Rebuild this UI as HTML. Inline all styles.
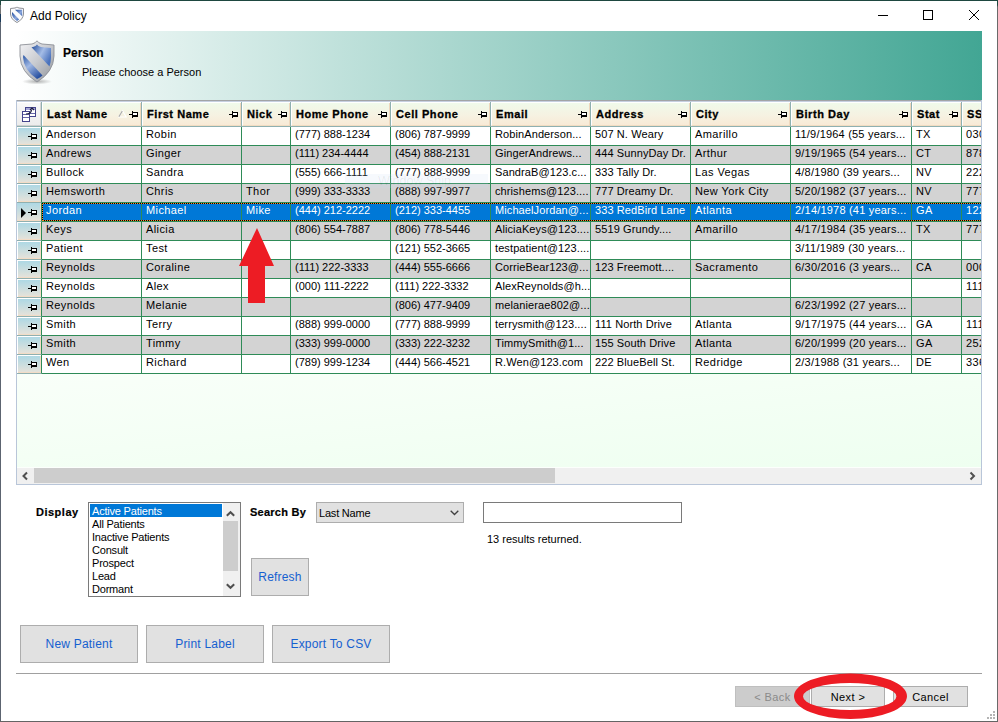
<!DOCTYPE html>
<html><head><meta charset="utf-8">
<style>
*{margin:0;padding:0;box-sizing:border-box}
html,body{width:998px;height:722px;overflow:hidden;background:#fff;font-family:"Liberation Sans",sans-serif;position:relative}
.a{position:absolute}
#bt{left:0;top:0;width:998px;height:1px;background:#1e4840}
#bl{left:0;top:0;width:1px;height:722px;background:linear-gradient(#1e4840 0,#1e4840 5px,#727272 5px,#727272 14px,#1a3a5a 14px,#1a3a5a 22px,#5c6470 22px,#5c6470)}
#br{left:997px;top:0;width:1px;height:722px;background:linear-gradient(#1e4840 0,#1e4840 5px,#6a6a6a 7px,#6a6a6a)}
#bb{left:0;top:721px;width:998px;height:1px;background:#646464}
#title{left:30px;top:8px;font-size:12px;color:#000;line-height:16px}
#band{left:16px;top:31px;width:966px;height:69px;background:linear-gradient(to right,#ffffff,#42a694)}
#person{left:63px;top:46px;font-size:12px;font-weight:bold;line-height:14px;-webkit-text-stroke:0.15px #000}
#choose{left:82px;top:66px;font-size:11px;line-height:13px}
.gw{left:17px;top:101px;width:964px;height:383px;overflow:hidden;background:#f4fff4}
#empty{left:17px;top:374px;width:964px;height:93px;border-bottom:0;background:linear-gradient(to bottom right,#f9fff9,#eefff0)}
.gi{position:absolute;left:-17px;top:-101px;width:1100px;height:600px}
#gbt{left:16px;top:100px;width:966px;height:1px;background:#a2a4a6}
#gbl{left:16px;top:100px;width:1px;height:385px;background:#b9c6d9}
#gbr{left:981px;top:100px;width:1px;height:385px;background:#b9c6d9}
#gbb{left:16px;top:484px;width:966px;height:1px;background:#b9c6d9}
.hdr{position:absolute;left:17px;top:101px;width:1100px;height:26px;background:#fff;border-top:1px solid #c6d0e0;border-bottom:1px solid #8fb0b0}
.hc{position:absolute;top:103px;height:23px;background:linear-gradient(#f0faea,#f6f2e2 55%,#f8ead6);border-left:1px solid #fff;border-right:1px solid #efd8be;border-bottom:1px solid #f1dcc2}
.ht{position:absolute;left:4px;top:5px;font-size:11px;font-weight:bold;letter-spacing:0.55px;-webkit-text-stroke:0.3px #000;line-height:13px;color:#000;white-space:nowrap}
.hsep{position:absolute;top:102px;width:1px;height:25px;background:#8fb0b0}
.corner{position:absolute;left:17px;top:102px;width:24px;height:24px;border-top:1px solid #fff;background:linear-gradient(#f8f8f8,#ececec);border-right:1px solid #d6d6d6;border-bottom:1px solid #d0d0d0}
.csep{position:absolute;left:41px;top:102px;width:1px;height:25px;background:#8fb0b0}
.row{position:absolute;left:17px;width:1100px;height:19px;background:#fff}
.row.alt .c{background:#d3d3d3}
.row.sel .c{background:#0078d7;color:#fff}
.c{position:absolute;top:0;height:18px;font-size:11px;line-height:14px;padding-left:4px;letter-spacing:0.4px;white-space:nowrap;overflow:hidden;color:#000;border-bottom:1px solid #2e8b57;border-right:1px solid #2e8b57;box-sizing:content-box}
.rs{position:absolute;left:0;top:0;width:25px;height:19px;background:#fff;border-bottom:1px solid #8fb0b0;border-right:1px solid #2e8b57}
.rs:before{content:"";position:absolute;left:1px;top:1px;width:22px;height:16px;background:linear-gradient(#aed8e4,#e4e2da);border-right:1px solid #f3dcc6;border-bottom:1px solid #f3dcc6}
.pin{position:absolute;display:block}
.row.sel .rs:before{left:0;top:0;width:23px;height:17px}
.fh{position:absolute;left:25px;width:1000px;height:1px;background:repeating-linear-gradient(to right,#000 0,#000 1px,#ff8a28 1px,#ff8a28 2px)}
.fv{position:absolute;left:25px;top:0;width:1px;height:18px;background:repeating-linear-gradient(#000 0,#000 1px,#ff8a28 1px,#ff8a28 2px)}
.rp{left:11px;top:6px}
.hp{right:2px;top:8px}
.sort{position:absolute;left:75px;top:7px}
.arr{position:absolute;left:4px;top:5px;width:0;height:0;border-top:5px solid transparent;border-bottom:5px solid transparent;border-left:5px solid #000}
.lbl{font-size:11px;font-weight:bold;letter-spacing:0.5px;line-height:13px;-webkit-text-stroke:0.2px #000}
#lb{left:88px;top:502px;width:153px;height:95px;border:1px solid #7a7a7a;background:#fff}
#lb .it{position:absolute;left:3px;font-size:11px;line-height:13px;white-space:nowrap}
#lbsel{left:90px;top:504px;width:132px;height:13px;background:#0078d7}
#lbsb{left:223px;top:503px;width:17px;height:93px;background:#f0f0f0}
#lbth{left:223px;top:521px;width:15px;height:50px;background:#cdcdcd}
#combo{left:316px;top:502px;width:148px;height:21px;background:#e1e1e1;border:1px solid #adadad}
#combo span{position:absolute;left:2px;top:4px;letter-spacing:-0.2px;font-size:11px;line-height:13px}
#tb{left:483px;top:502px;width:199px;height:21px;border:1px solid #7a7a7a;background:#fff}
#res{left:487px;top:533px;font-size:11px;line-height:13px}
.btn{position:absolute;background:#e1e1e1;border:1px solid #adadad;color:#1560d0;font-size:12px;text-align:center;letter-spacing:0.2px}
#sep{left:16px;top:673px;width:966px;height:1px;background:#a0a0a0}
</style></head><body>
<div class="a" id="bt"></div><div class="a" id="bl"></div><div class="a" id="br"></div><div class="a" id="bb"></div>
<svg class="a" style="left:9px;top:6px" width="17" height="18" viewBox="9 6 17 18">
<defs><linearGradient id="tb1" x1="0" y1="0" x2="1" y2="1"><stop offset="0" stop-color="#1c4a9c"/><stop offset="0.6" stop-color="#8aa6dc"/><stop offset="1" stop-color="#3a64b0"/></linearGradient></defs>
<path d="M10.5,8.5 L15,8 Q16.5,7.6 17,7 Q17.5,7.6 19,8 L23.5,8.5 L23.5,14 Q23,19.5 17,22.5 Q11,19.5 10.5,14 Z" fill="#fbfbfc" stroke="#8e9196" stroke-width="1"/>
<path d="M15,9.8 L22.2,9.8 L22.2,16.2 Z" fill="url(#tb1)"/>
<path d="M12,12 L19.2,19.6 Q18.2,20.4 17,21 Q12.3,18 12,14 Z" fill="url(#tb1)"/>
</svg>
<div class="a" id="title">Add Policy</div>
<svg class="a" style="left:878px;top:10px" width="102" height="11" shape-rendering="crispEdges">
<rect x="0" y="5" width="10" height="1" fill="#000"/>
<rect x="45.5" y="0.5" width="9" height="9" fill="none" stroke="#000" stroke-width="1"/>
<path d="M91,0 L101,10 M101,0 L91,10" stroke="#000" stroke-width="1" shape-rendering="geometricPrecision"/>
</svg>
<div class="a" id="band"></div>
<svg class="a" style="left:16px;top:38px" width="42" height="48" viewBox="16 38 42 48">
<defs>
<linearGradient id="rim" x1="0" y1="0" x2="1" y2="1"><stop offset="0" stop-color="#f4f4f6"/><stop offset="0.5" stop-color="#c8cacf"/><stop offset="1" stop-color="#8e9298"/></linearGradient>
<linearGradient id="blu1" x1="0" y1="0" x2="1" y2="0.6"><stop offset="0" stop-color="#1f4a98"/><stop offset="0.55" stop-color="#a4bce6"/><stop offset="1" stop-color="#4a72bc"/></linearGradient>
<linearGradient id="blu2" x1="0" y1="0" x2="0.7" y2="1"><stop offset="0" stop-color="#2a56a4"/><stop offset="0.45" stop-color="#a0b8e4"/><stop offset="1" stop-color="#2850a0"/></linearGradient>
<linearGradient id="band" x1="0" y1="0" x2="1" y2="0"><stop offset="0" stop-color="#dcdde2"/><stop offset="0.5" stop-color="#f2f3f5"/><stop offset="0.52" stop-color="#d8dade"/><stop offset="1" stop-color="#eceef0"/></linearGradient>
<radialGradient id="shd" cx="0.5" cy="0.5" r="0.5"><stop offset="0" stop-color="#000" stop-opacity="0.3"/><stop offset="1" stop-color="#000" stop-opacity="0"/></radialGradient>
</defs>
<ellipse cx="37" cy="81.5" rx="15" ry="3" fill="url(#shd)"/>
<path d="M20,45 L32,44 Q35.5,43.2 37,40.8 Q38.5,43.2 42,44 L54,45 L54,56 Q53.5,72 37,82 Q20.5,72 20,56 Z" fill="url(#rim)" stroke="#8c9096" stroke-width="0.9"/>
<path d="M23,48 L33,47 Q36,46.2 37,44.5 Q38,46.2 41,47 L51,48 L51,57 Q50.5,70 37,79 Q23.5,70 23,57 Z" fill="url(#band)"/>
<path d="M31.5,47.3 L33,47 Q36,46.2 37,44.5 Q38,46.2 41,47 L51,48 L51,57 Q51,62 49.5,66.5 Z" fill="url(#blu1)"/>
<path d="M23.5,55 L42.5,75.5 Q40,77.5 37,79 Q23.5,70 23,57 Z" fill="url(#blu2)"/>
</svg>
<div class="a" id="person">Person</div>
<div class="a" id="choose">Please choose a Person</div>
<div class="a gw"><div class="gi">
<div class="hdr"></div>
<div class="corner"></div><div class="csep"></div>
<svg style="position:absolute;left:22px;top:107px" width="15" height="15" shape-rendering="crispEdges">
<rect x="3.5" y="0.5" width="10" height="9" fill="#fff" stroke="#44448c"/>
<rect x="4" y="1" width="9" height="2" fill="#a8a8d8"/>
<rect x="0.5" y="4.5" width="7" height="10" fill="#fff" stroke="#44448c"/>
<path d="M1,7.5 H7 M1,10.5 H7 M8,6.5 H13" stroke="#6868a8"/>
<path d="M4,7 Q9,7 9.5,3 M8,3 L10,1 L12,3" stroke="#202040" fill="none" stroke-width="1.2" shape-rendering="geometricPrecision"/>
</svg>
<div class="hc" style="left:42px;width:99px"><span class="ht">Last Name</span><svg class="sort" width="9" height="8"><path d="M4.5,0.8 L8.2,7 L0.8,7 Z" fill="none" stroke="#fff" stroke-width="1.2"/><path d="M4.3,1 L0.9,6.8" stroke="#a8a8a8" stroke-width="1.1"/></svg><svg class="pin hp" width="9" height="7" shape-rendering="crispEdges"><rect x="0" y="3" width="3" height="1"/><rect x="3" y="0" width="1" height="7"/><rect x="4" y="1" width="5" height="5"/><rect x="4" y="2" width="4" height="2" fill="#fff"/></svg></div>
<div class="hsep" style="left:141px"></div>
<div class="hc" style="left:142px;width:99px"><span class="ht">First Name</span><svg class="pin hp" width="9" height="7" shape-rendering="crispEdges"><rect x="0" y="3" width="3" height="1"/><rect x="3" y="0" width="1" height="7"/><rect x="4" y="1" width="5" height="5"/><rect x="4" y="2" width="4" height="2" fill="#fff"/></svg></div>
<div class="hsep" style="left:241px"></div>
<div class="hc" style="left:242px;width:48px"><span class="ht">Nick</span><svg class="pin hp" width="9" height="7" shape-rendering="crispEdges"><rect x="0" y="3" width="3" height="1"/><rect x="3" y="0" width="1" height="7"/><rect x="4" y="1" width="5" height="5"/><rect x="4" y="2" width="4" height="2" fill="#fff"/></svg></div>
<div class="hsep" style="left:290px"></div>
<div class="hc" style="left:291px;width:99px"><span class="ht">Home Phone</span><svg class="pin hp" width="9" height="7" shape-rendering="crispEdges"><rect x="0" y="3" width="3" height="1"/><rect x="3" y="0" width="1" height="7"/><rect x="4" y="1" width="5" height="5"/><rect x="4" y="2" width="4" height="2" fill="#fff"/></svg></div>
<div class="hsep" style="left:390px"></div>
<div class="hc" style="left:391px;width:99px"><span class="ht">Cell Phone</span><svg class="pin hp" width="9" height="7" shape-rendering="crispEdges"><rect x="0" y="3" width="3" height="1"/><rect x="3" y="0" width="1" height="7"/><rect x="4" y="1" width="5" height="5"/><rect x="4" y="2" width="4" height="2" fill="#fff"/></svg></div>
<div class="hsep" style="left:490px"></div>
<div class="hc" style="left:491px;width:99px"><span class="ht">Email</span><svg class="pin hp" width="9" height="7" shape-rendering="crispEdges"><rect x="0" y="3" width="3" height="1"/><rect x="3" y="0" width="1" height="7"/><rect x="4" y="1" width="5" height="5"/><rect x="4" y="2" width="4" height="2" fill="#fff"/></svg></div>
<div class="hsep" style="left:590px"></div>
<div class="hc" style="left:591px;width:99px"><span class="ht">Address</span><svg class="pin hp" width="9" height="7" shape-rendering="crispEdges"><rect x="0" y="3" width="3" height="1"/><rect x="3" y="0" width="1" height="7"/><rect x="4" y="1" width="5" height="5"/><rect x="4" y="2" width="4" height="2" fill="#fff"/></svg></div>
<div class="hsep" style="left:690px"></div>
<div class="hc" style="left:691px;width:99px"><span class="ht">City</span><svg class="pin hp" width="9" height="7" shape-rendering="crispEdges"><rect x="0" y="3" width="3" height="1"/><rect x="3" y="0" width="1" height="7"/><rect x="4" y="1" width="5" height="5"/><rect x="4" y="2" width="4" height="2" fill="#fff"/></svg></div>
<div class="hsep" style="left:790px"></div>
<div class="hc" style="left:791px;width:120px"><span class="ht">Birth Day</span><svg class="pin hp" width="9" height="7" shape-rendering="crispEdges"><rect x="0" y="3" width="3" height="1"/><rect x="3" y="0" width="1" height="7"/><rect x="4" y="1" width="5" height="5"/><rect x="4" y="2" width="4" height="2" fill="#fff"/></svg></div>
<div class="hsep" style="left:911px"></div>
<div class="hc" style="left:912px;width:49px"><span class="ht">Stat</span><svg class="pin hp" width="9" height="7" shape-rendering="crispEdges"><rect x="0" y="3" width="3" height="1"/><rect x="3" y="0" width="1" height="7"/><rect x="4" y="1" width="5" height="5"/><rect x="4" y="2" width="4" height="2" fill="#fff"/></svg></div>
<div class="hsep" style="left:961px"></div>
<div class="hc" style="left:962px;width:138px"><span class="ht">SSN</span></div>
<div class="hsep" style="left:1100px"></div>
<div class="row" style="top:127px"><div class="rs"><svg class="pin rp" width="9" height="7" shape-rendering="crispEdges"><rect x="0" y="3" width="3" height="1"/><rect x="3" y="0" width="1" height="7"/><rect x="4" y="1" width="5" height="5"/><rect x="4" y="2" width="4" height="2" fill="#fff"/></svg></div><div class="c" style="left:25px;width:95px">Anderson</div><div class="c" style="left:125px;width:95px">Robin</div><div class="c" style="left:225px;width:44px"></div><div class="c" style="left:274px;width:95px;letter-spacing:0">(777) 888-1234</div><div class="c" style="left:374px;width:95px;letter-spacing:0">(806) 787-9999</div><div class="c" style="left:474px;width:95px;letter-spacing:0.1px">RobinAnderson...</div><div class="c" style="left:574px;width:95px;letter-spacing:0.1px">507 N. Weary</div><div class="c" style="left:674px;width:95px">Amarillo</div><div class="c" style="left:774px;width:116px;letter-spacing:0.2px">11/9/1964 (55 years...</div><div class="c" style="left:895px;width:45px">TX</div><div class="c" style="left:945px;width:134px">030</div></div>
<div class="row alt" style="top:146px"><div class="rs"><svg class="pin rp" width="9" height="7" shape-rendering="crispEdges"><rect x="0" y="3" width="3" height="1"/><rect x="3" y="0" width="1" height="7"/><rect x="4" y="1" width="5" height="5"/><rect x="4" y="2" width="4" height="2" fill="#fff"/></svg></div><div class="c" style="left:25px;width:95px">Andrews</div><div class="c" style="left:125px;width:95px">Ginger</div><div class="c" style="left:225px;width:44px"></div><div class="c" style="left:274px;width:95px;letter-spacing:0">(111) 234-4444</div><div class="c" style="left:374px;width:95px;letter-spacing:0">(454) 888-2131</div><div class="c" style="left:474px;width:95px;letter-spacing:0.1px">GingerAndrews...</div><div class="c" style="left:574px;width:95px;letter-spacing:0.1px">444 SunnyDay Dr.</div><div class="c" style="left:674px;width:95px">Arthur</div><div class="c" style="left:774px;width:116px;letter-spacing:0.2px">9/19/1965 (54 years...</div><div class="c" style="left:895px;width:45px">CT</div><div class="c" style="left:945px;width:134px">878</div></div>
<div class="row" style="top:165px"><div class="rs"><svg class="pin rp" width="9" height="7" shape-rendering="crispEdges"><rect x="0" y="3" width="3" height="1"/><rect x="3" y="0" width="1" height="7"/><rect x="4" y="1" width="5" height="5"/><rect x="4" y="2" width="4" height="2" fill="#fff"/></svg></div><div class="c" style="left:25px;width:95px">Bullock</div><div class="c" style="left:125px;width:95px">Sandra</div><div class="c" style="left:225px;width:44px"></div><div class="c" style="left:274px;width:95px;letter-spacing:0">(555) 666-1111</div><div class="c" style="left:374px;width:95px;letter-spacing:0">(777) 888-9999</div><div class="c" style="left:474px;width:95px;letter-spacing:0.1px">SandraB@123.c...</div><div class="c" style="left:574px;width:95px;letter-spacing:0.1px">333 Tally Dr.</div><div class="c" style="left:674px;width:95px">Las Vegas</div><div class="c" style="left:774px;width:116px;letter-spacing:0.2px">4/8/1980 (39 years...</div><div class="c" style="left:895px;width:45px">NV</div><div class="c" style="left:945px;width:134px">222</div></div>
<div class="row alt" style="top:184px"><div class="rs"><svg class="pin rp" width="9" height="7" shape-rendering="crispEdges"><rect x="0" y="3" width="3" height="1"/><rect x="3" y="0" width="1" height="7"/><rect x="4" y="1" width="5" height="5"/><rect x="4" y="2" width="4" height="2" fill="#fff"/></svg></div><div class="c" style="left:25px;width:95px">Hemsworth</div><div class="c" style="left:125px;width:95px">Chris</div><div class="c" style="left:225px;width:44px">Thor</div><div class="c" style="left:274px;width:95px;letter-spacing:0">(999) 333-3333</div><div class="c" style="left:374px;width:95px;letter-spacing:0">(888) 997-9977</div><div class="c" style="left:474px;width:95px;letter-spacing:0.1px">chrishems@123....</div><div class="c" style="left:574px;width:95px;letter-spacing:0.1px">777 Dreamy Dr.</div><div class="c" style="left:674px;width:95px">New York City</div><div class="c" style="left:774px;width:116px;letter-spacing:0.2px">5/20/1982 (37 years...</div><div class="c" style="left:895px;width:45px">NV</div><div class="c" style="left:945px;width:134px">777</div></div>
<div class="row sel" style="top:203px"><div class="rs"><i class="arr"></i><svg class="pin rp" width="9" height="7" shape-rendering="crispEdges"><rect x="0" y="3" width="3" height="1"/><rect x="3" y="0" width="1" height="7"/><rect x="4" y="1" width="5" height="5"/><rect x="4" y="2" width="4" height="2" fill="#fff"/></svg></div><div class="c" style="left:25px;width:95px">Jordan</div><div class="c" style="left:125px;width:95px">Michael</div><div class="c" style="left:225px;width:44px">Mike</div><div class="c" style="left:274px;width:95px;letter-spacing:0">(444) 212-2222</div><div class="c" style="left:374px;width:95px;letter-spacing:0">(212) 333-4455</div><div class="c" style="left:474px;width:95px;letter-spacing:0.1px">MichaelJordan@...</div><div class="c" style="left:574px;width:95px;letter-spacing:0.1px">333 RedBird Lane</div><div class="c" style="left:674px;width:95px">Atlanta</div><div class="c" style="left:774px;width:116px;letter-spacing:0.2px">2/14/1978 (41 years...</div><div class="c" style="left:895px;width:45px">GA</div><div class="c" style="left:945px;width:134px">122</div><div class="fh" style="top:0"></div><div class="fh" style="top:17px"></div><div class="fv"></div></div>
<div class="row alt" style="top:222px"><div class="rs"><svg class="pin rp" width="9" height="7" shape-rendering="crispEdges"><rect x="0" y="3" width="3" height="1"/><rect x="3" y="0" width="1" height="7"/><rect x="4" y="1" width="5" height="5"/><rect x="4" y="2" width="4" height="2" fill="#fff"/></svg></div><div class="c" style="left:25px;width:95px">Keys</div><div class="c" style="left:125px;width:95px">Alicia</div><div class="c" style="left:225px;width:44px"></div><div class="c" style="left:274px;width:95px;letter-spacing:0">(806) 554-7887</div><div class="c" style="left:374px;width:95px;letter-spacing:0">(806) 778-5446</div><div class="c" style="left:474px;width:95px;letter-spacing:0.1px">AliciaKeys@123....</div><div class="c" style="left:574px;width:95px;letter-spacing:0.1px">5519 Grundy....</div><div class="c" style="left:674px;width:95px">Amarillo</div><div class="c" style="left:774px;width:116px;letter-spacing:0.2px">4/17/1984 (35 years...</div><div class="c" style="left:895px;width:45px">TX</div><div class="c" style="left:945px;width:134px">777</div></div>
<div class="row" style="top:241px"><div class="rs"><svg class="pin rp" width="9" height="7" shape-rendering="crispEdges"><rect x="0" y="3" width="3" height="1"/><rect x="3" y="0" width="1" height="7"/><rect x="4" y="1" width="5" height="5"/><rect x="4" y="2" width="4" height="2" fill="#fff"/></svg></div><div class="c" style="left:25px;width:95px">Patient</div><div class="c" style="left:125px;width:95px">Test</div><div class="c" style="left:225px;width:44px"></div><div class="c" style="left:274px;width:95px;letter-spacing:0"></div><div class="c" style="left:374px;width:95px;letter-spacing:0">(121) 552-3665</div><div class="c" style="left:474px;width:95px;letter-spacing:0.1px">testpatient@123....</div><div class="c" style="left:574px;width:95px;letter-spacing:0.1px"></div><div class="c" style="left:674px;width:95px"></div><div class="c" style="left:774px;width:116px;letter-spacing:0.2px">3/11/1989 (30 years...</div><div class="c" style="left:895px;width:45px"></div><div class="c" style="left:945px;width:134px"></div></div>
<div class="row alt" style="top:260px"><div class="rs"><svg class="pin rp" width="9" height="7" shape-rendering="crispEdges"><rect x="0" y="3" width="3" height="1"/><rect x="3" y="0" width="1" height="7"/><rect x="4" y="1" width="5" height="5"/><rect x="4" y="2" width="4" height="2" fill="#fff"/></svg></div><div class="c" style="left:25px;width:95px">Reynolds</div><div class="c" style="left:125px;width:95px">Coraline</div><div class="c" style="left:225px;width:44px"></div><div class="c" style="left:274px;width:95px;letter-spacing:0">(111) 222-3333</div><div class="c" style="left:374px;width:95px;letter-spacing:0">(444) 555-6666</div><div class="c" style="left:474px;width:95px;letter-spacing:0.1px">CorrieBear123@...</div><div class="c" style="left:574px;width:95px;letter-spacing:0.1px">123 Freemott....</div><div class="c" style="left:674px;width:95px">Sacramento</div><div class="c" style="left:774px;width:116px;letter-spacing:0.2px">6/30/2016 (3 years...</div><div class="c" style="left:895px;width:45px">CA</div><div class="c" style="left:945px;width:134px">000</div></div>
<div class="row" style="top:279px"><div class="rs"><svg class="pin rp" width="9" height="7" shape-rendering="crispEdges"><rect x="0" y="3" width="3" height="1"/><rect x="3" y="0" width="1" height="7"/><rect x="4" y="1" width="5" height="5"/><rect x="4" y="2" width="4" height="2" fill="#fff"/></svg></div><div class="c" style="left:25px;width:95px">Reynolds</div><div class="c" style="left:125px;width:95px">Alex</div><div class="c" style="left:225px;width:44px"></div><div class="c" style="left:274px;width:95px;letter-spacing:0">(000) 111-2222</div><div class="c" style="left:374px;width:95px;letter-spacing:0">(111) 222-3332</div><div class="c" style="left:474px;width:95px;letter-spacing:0.1px">AlexReynolds@h...</div><div class="c" style="left:574px;width:95px;letter-spacing:0.1px"></div><div class="c" style="left:674px;width:95px"></div><div class="c" style="left:774px;width:116px;letter-spacing:0.2px"></div><div class="c" style="left:895px;width:45px"></div><div class="c" style="left:945px;width:134px">111</div></div>
<div class="row alt" style="top:298px"><div class="rs"><svg class="pin rp" width="9" height="7" shape-rendering="crispEdges"><rect x="0" y="3" width="3" height="1"/><rect x="3" y="0" width="1" height="7"/><rect x="4" y="1" width="5" height="5"/><rect x="4" y="2" width="4" height="2" fill="#fff"/></svg></div><div class="c" style="left:25px;width:95px">Reynolds</div><div class="c" style="left:125px;width:95px">Melanie</div><div class="c" style="left:225px;width:44px"></div><div class="c" style="left:274px;width:95px;letter-spacing:0"></div><div class="c" style="left:374px;width:95px;letter-spacing:0">(806) 477-9409</div><div class="c" style="left:474px;width:95px;letter-spacing:0.1px">melanierae802@...</div><div class="c" style="left:574px;width:95px;letter-spacing:0.1px"></div><div class="c" style="left:674px;width:95px"></div><div class="c" style="left:774px;width:116px;letter-spacing:0.2px">6/23/1992 (27 years...</div><div class="c" style="left:895px;width:45px"></div><div class="c" style="left:945px;width:134px"></div></div>
<div class="row" style="top:317px"><div class="rs"><svg class="pin rp" width="9" height="7" shape-rendering="crispEdges"><rect x="0" y="3" width="3" height="1"/><rect x="3" y="0" width="1" height="7"/><rect x="4" y="1" width="5" height="5"/><rect x="4" y="2" width="4" height="2" fill="#fff"/></svg></div><div class="c" style="left:25px;width:95px">Smith</div><div class="c" style="left:125px;width:95px">Terry</div><div class="c" style="left:225px;width:44px"></div><div class="c" style="left:274px;width:95px;letter-spacing:0">(888) 999-0000</div><div class="c" style="left:374px;width:95px;letter-spacing:0">(777) 888-9999</div><div class="c" style="left:474px;width:95px;letter-spacing:0.1px">terrysmith@123....</div><div class="c" style="left:574px;width:95px;letter-spacing:0.1px">111 North Drive</div><div class="c" style="left:674px;width:95px">Atlanta</div><div class="c" style="left:774px;width:116px;letter-spacing:0.2px">9/17/1975 (44 years...</div><div class="c" style="left:895px;width:45px">GA</div><div class="c" style="left:945px;width:134px">111</div></div>
<div class="row alt" style="top:336px"><div class="rs"><svg class="pin rp" width="9" height="7" shape-rendering="crispEdges"><rect x="0" y="3" width="3" height="1"/><rect x="3" y="0" width="1" height="7"/><rect x="4" y="1" width="5" height="5"/><rect x="4" y="2" width="4" height="2" fill="#fff"/></svg></div><div class="c" style="left:25px;width:95px">Smith</div><div class="c" style="left:125px;width:95px">Timmy</div><div class="c" style="left:225px;width:44px"></div><div class="c" style="left:274px;width:95px;letter-spacing:0">(333) 999-0000</div><div class="c" style="left:374px;width:95px;letter-spacing:0">(333) 222-3232</div><div class="c" style="left:474px;width:95px;letter-spacing:0.1px">TimmySmith@1...</div><div class="c" style="left:574px;width:95px;letter-spacing:0.1px">155 South Drive</div><div class="c" style="left:674px;width:95px">Atlanta</div><div class="c" style="left:774px;width:116px;letter-spacing:0.2px">6/20/1999 (20 years...</div><div class="c" style="left:895px;width:45px">GA</div><div class="c" style="left:945px;width:134px">252</div></div>
<div class="row" style="top:355px"><div class="rs"><svg class="pin rp" width="9" height="7" shape-rendering="crispEdges"><rect x="0" y="3" width="3" height="1"/><rect x="3" y="0" width="1" height="7"/><rect x="4" y="1" width="5" height="5"/><rect x="4" y="2" width="4" height="2" fill="#fff"/></svg></div><div class="c" style="left:25px;width:95px">Wen</div><div class="c" style="left:125px;width:95px">Richard</div><div class="c" style="left:225px;width:44px"></div><div class="c" style="left:274px;width:95px;letter-spacing:0">(789) 999-1234</div><div class="c" style="left:374px;width:95px;letter-spacing:0">(444) 566-4521</div><div class="c" style="left:474px;width:95px;letter-spacing:0.1px">R.Wen@123.com</div><div class="c" style="left:574px;width:95px;letter-spacing:0.1px">222 BlueBell St.</div><div class="c" style="left:674px;width:95px">Redridge</div><div class="c" style="left:774px;width:116px;letter-spacing:0.2px">2/3/1988 (31 years...</div><div class="c" style="left:895px;width:45px">DE</div><div class="c" style="left:945px;width:134px">336</div></div>
<svg style="position:absolute;left:0;top:0" width="998" height="500">
<polygon points="257,228 274,266 265,266 265,303 248,303 248,266 239,266" fill="#ed1c24"/>
</svg>
</div></div>
<div class="a" id="empty"></div><div class="a" style="left:17px;top:467px;width:964px;height:1px;background:#fcfffc"></div>
<div class="a" style="left:345px;top:174px;width:143px;height:14px;background:rgba(200,220,245,0.16)"></div><div class="a" style="left:378px;top:174px;font-size:12.5px;line-height:15px;color:rgba(0,0,0,0.07);white-space:nowrap">Window Snip</div><div class="a" id="gbt"></div><div class="a" id="gbl"></div><div class="a" id="gbr"></div><div class="a" id="gbb"></div>
<!-- hscroll -->
<div class="a" style="left:17px;top:468px;width:964px;height:16px;background:#f0f0f0"></div>
<div class="a" style="left:34px;top:468px;width:521px;height:15px;background:#cdcdcd"></div>
<svg class="a" style="left:17px;top:468px" width="964" height="16">
<path d="M10,4.5 L6.5,8 L10,11.5" stroke="#505050" stroke-width="2" fill="none"/>
<path d="M953.5,4.5 L957,8 L953.5,11.5" stroke="#505050" stroke-width="2" fill="none"/>
</svg>
<!-- bottom -->
<div class="a lbl" style="left:36px;top:506px">Display</div>
<div class="a" id="lb"></div>
<div class="a" id="lbsel"></div>
<div class="a" id="lbsb"></div>
<div class="a" id="lbth"></div>
<svg class="a" style="left:223px;top:503px" width="17" height="93">
<path d="M3.8,12.8 L7.5,9.2 L11.2,12.8" stroke="#505050" stroke-width="2" fill="none"/>
<path d="M3.8,81.2 L7.5,84.8 L11.2,81.2" stroke="#505050" stroke-width="2" fill="none"/>
</svg>
<div class="a" style="left:92px;top:505px;font-size:11px;line-height:13px;color:#000;letter-spacing:-0.2px">
<div style="color:#fff">Active Patients</div><div>All Patients</div><div>Inactive Patients</div><div>Consult</div><div>Prospect</div><div>Lead</div><div>Dormant</div>
</div>
<div class="a lbl" style="left:250px;top:506px;letter-spacing:0.25px">Search By</div>
<div class="a" id="combo"><span>Last Name</span>
<svg style="position:absolute;left:133px;top:7px" width="10" height="7"><path d="M0.7,0.7 L4.5,4.5 L8.3,0.7" stroke="#404040" stroke-width="1.3" fill="none"/></svg></div>
<div class="a" id="tb"></div>
<div class="a" id="res">13 results returned.</div>
<div class="btn" style="left:251px;top:558px;width:58px;height:38px;line-height:36px">Refresh</div>
<div class="btn" style="left:20px;top:625px;width:118px;height:38px;line-height:36px">New Patient</div>
<div class="btn" style="left:146px;top:625px;width:118px;height:38px;line-height:36px">Print Label</div>
<div class="btn" style="left:272px;top:625px;width:118px;height:38px;line-height:36px">Export To CSV</div>
<div class="a" id="sep"></div>
<div class="btn" style="left:735px;top:686px;width:75px;height:21px;line-height:21px;font-size:11px;letter-spacing:0.4px;background:#cccccc;border-color:#bfbfbf;color:#8a8a8a">&lt; Back</div>
<div class="btn" style="left:811px;top:686px;width:74px;height:21px;line-height:21px;font-size:11px;letter-spacing:0.4px;border-color:#adadad;color:#000">Next &gt;</div>
<div class="btn" style="left:893px;top:686px;width:75px;height:21px;line-height:21px;font-size:11px;letter-spacing:0.4px;color:#000">Cancel</div>
<svg class="a" style="left:980px;top:705px" width="16" height="16" shape-rendering="crispEdges">
<g fill="#b4b4b4"><rect x="13" y="6" width="2" height="2"/><rect x="10" y="9" width="2" height="2"/><rect x="13" y="9" width="2" height="2"/><rect x="7" y="12" width="2" height="2"/><rect x="10" y="12" width="2" height="2"/><rect x="13" y="12" width="2" height="2"/></g>
</svg>
<svg class="a" style="left:790px;top:670px" width="122" height="52">
<path fill-rule="evenodd" fill="#ed1c24" d="M4,26.2 A56.5,22.8 0 1,0 117,26.2 A56.5,22.8 0 1,0 4,26.2 Z M13,26.5 A46.7,13.4 0 1,1 106.4,26.5 A46.7,13.4 0 1,1 13,26.5 Z"/>
</svg>
</body></html>
